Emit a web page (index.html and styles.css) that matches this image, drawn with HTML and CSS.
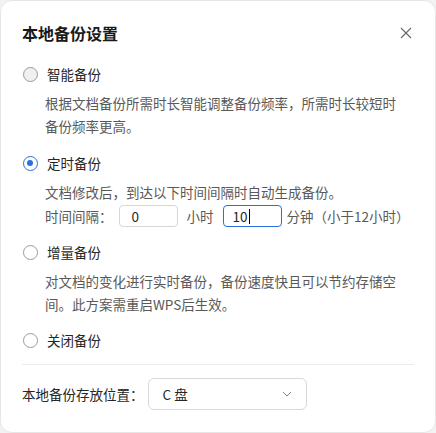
FILE: index.html
```html
<!DOCTYPE html>
<html lang="zh-CN">
<head>
<meta charset="utf-8">
<link rel="stylesheet" href="styles.css">
</head>
<body>
<div class="card">
  <div class="header">
    <div class="title">本地备份设置</div>
    <svg class="close" width="12" height="12" viewBox="0 0 12 12"><path d="M1 1L11 11M11 1L1 11" stroke="#666" stroke-width="1.1" fill="none"/></svg>
  </div>

  <div class="option">
    <div class="opt-row"><span class="radio hover"></span><span class="label">智能备份</span></div>
    <div class="desc">根据文档备份所需时长智能调整备份频率，所需时长较短时<br>备份频率更高。</div>
  </div>

  <div class="option tight">
    <div class="opt-row"><span class="radio checked"></span><span class="label">定时备份</span></div>
    <div class="desc">文档修改后，到达以下时间间隔时自动生成备份。</div>
    <div class="time-row">
      <span>时间间隔：</span>
      <span class="input first">0</span>
      <span>小时</span>
      <span class="input focus">10<span class="caret"></span></span>
      <span>分钟（小于12小时）</span>
    </div>
  </div>

  <div class="option tight">
    <div class="opt-row"><span class="radio"></span><span class="label">增量备份</span></div>
    <div class="desc">对文档的变化进行实时备份，备份速度快且可以节约存储空<br>间。此方案需重启WPS后生效。</div>
  </div>

  <div class="option last">
    <div class="opt-row"><span class="radio"></span><span class="label">关闭备份</span></div>
  </div>

  <div class="divider"></div>

  <div class="footer">
    <span class="flabel">本地备份存放位置：</span>
    <div class="select">
      <span>C 盘</span>
      <svg width="10" height="6" viewBox="0 0 10 6"><path d="M1 1L5 5L9 1" stroke="#888" stroke-width="1" fill="none"/></svg>
    </div>
  </div>
</div>
</body>
</html>
```

FILE: styles.css
```css
html, body {
  margin: 0;
  padding: 0;
  background: #f2f2f2;
}
body {
  font-family: "Noto Sans CJK SC", "Noto Sans", sans-serif;
  color: #262626;
}
.card {
  width: 436px;
  height: 433px;
  box-sizing: border-box;
  background: #fff;
  border-radius: 12px;
  border: 1px solid #e6e6e6;
  padding: 0 21px;
  display: flex;
  flex-direction: column;
}
.header {
  display: flex;
  align-items: center;
  justify-content: space-between;
  height: 24px;
  margin-top: 20px;
  margin-bottom: 17px;
}
.title {
  font-size: 16px;
  font-weight: bold;
  color: #1a1a1a;
  line-height: 24px;
}
.close {
  margin-right: 2px;
}
.option {
  margin-bottom: 13px;
}
.option.tight {
  margin-bottom: 12px;
}
.option.last {
  margin-bottom: 0;
}
.opt-row {
  display: flex;
  align-items: center;
  height: 24px;
}
.radio {
  width: 15px;
  height: 15px;
  box-sizing: border-box;
  border-radius: 50%;
  border: 1px solid #9a9a9a;
  background: #fff;
  margin-left: 1px;
  margin-right: 9px;
  position: relative;
}
.radio.hover {
  background: #f0f0f0;
}
.radio.checked {
  border: 1.5px solid #2b6fde;
}
.radio.checked::after {
  content: "";
  position: absolute;
  left: 3px;
  top: 3px;
  width: 6px;
  height: 6px;
  border-radius: 50%;
  background: #2b6fde;
}
.label {
  font-size: 13.5px;
  color: #262626;
}
.desc {
  margin-top: 6px;
  padding-left: 23px;
  font-size: 13.5px;
  line-height: 23px;
  color: #595959;
}
.time-row {
  padding-left: 23px;
  display: flex;
  align-items: center;
  height: 24px;
  font-size: 13.5px;
  color: #595959;
}
.input {
  width: 59px;
  height: 22px;
  box-sizing: border-box;
  border: 1px solid #d6d6d6;
  border-radius: 4px;
  padding-left: 12px;
  line-height: 20px;
  color: #262626;
  display: flex;
  align-items: center;
}
.input.first {
  margin-left: 6px;
  margin-right: 9px;
}
.input.focus {
  border-color: #2b6fde;
  margin-left: 9px;
  margin-right: 5px;
  padding-left: 9px;
}
.caret {
  display: inline-block;
  width: 1px;
  height: 15px;
  background: #000;
  margin-left: 1px;
}
.divider {
  height: 1px;
  background: #ececec;
  margin-top: 12px;
  margin-bottom: 13px;
}
.footer {
  display: flex;
  align-items: center;
}
.flabel {
  font-size: 13.5px;
  color: #262626;
}
.select {
  width: 159px;
  height: 32px;
  box-sizing: border-box;
  border: 1px solid #d9d9d9;
  border-radius: 6px;
  margin-left: 4px;
  padding: 0 14px 0 14px;
  display: flex;
  align-items: center;
  justify-content: space-between;
  font-size: 13.5px;
  color: #262626;
}
```
